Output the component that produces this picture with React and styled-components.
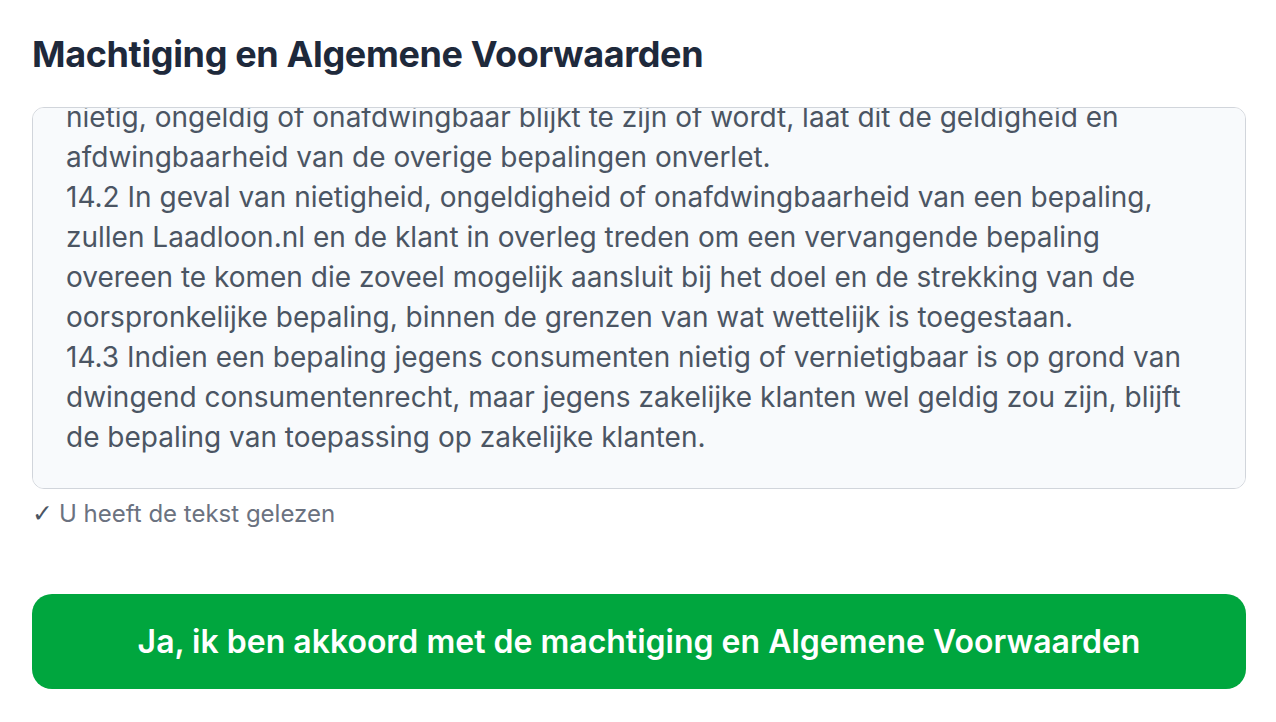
import React, { useEffect, useRef } from "react";
import styled, { createGlobalStyle } from "styled-components";

const GlobalStyle = createGlobalStyle`
  * { box-sizing: border-box; }
  body {
    margin: 0;
    background: #ffffff;
    font-family: Inter, "Noto Sans", sans-serif;
  }
`;

const Page = styled.main`
  display: flex;
  flex-direction: column;
  padding: 34px 30px 0 32px;
`;

const Title = styled.h1`
  margin: 0 0 33px;
  font-size: 36px;
  line-height: 40px;
  font-weight: 700;
  letter-spacing: -0.01em;
  color: #1e293b;
`;

const TermsBox = styled.div`
  height: 382px;
  overflow-y: auto;
  background: #f8fafc;
  border: 1px solid #d1d5db;
  border-radius: 12px;
  padding: 0 45px 31px 33px;
  scrollbar-width: none;

  &::-webkit-scrollbar {
    display: none;
  }
`;

const Paragraph = styled.p`
  margin: 0;
  font-size: 28px;
  line-height: 40px;
  color: #4b5563;
`;

const ReadNote = styled.div`
  display: flex;
  align-items: center;
  margin-top: 10px;
  font-size: 24px;
  line-height: 30px;
  color: #6b7280;
`;

const Check = styled.span`
  font-family: "DejaVu Sans", sans-serif;
  font-size: 25px;
  color: #4b5563;
  margin-right: 6px;
`;

const AgreeButton = styled.button`
  margin-top: 65px;
  width: 100%;
  border: none;
  border-radius: 20px;
  background: #00a63e;
  color: #ffffff;
  font-family: inherit;
  font-size: 32px;
  font-weight: 600;
  line-height: 33px;
  padding: 31px 24px;
  cursor: pointer;
`;

const paragraphs = [
  "13.1 Op deze algemene voorwaarden en alle overeenkomsten tussen Laadloon.nl en de klant is uitsluitend Nederlands recht van toepassing.",
  "13.2 Geschillen worden bij voorkeur in onderling overleg opgelost. Indien dit niet lukt, worden geschillen voorgelegd aan de bevoegde rechter in het arrondissement waar Laadloon.nl is gevestigd.",
  "14.1 Indien een of meer bepalingen van deze algemene voorwaarden op enig moment nietig, ongeldig of onafdwingbaar blijkt te zijn of wordt, laat dit de geldigheid en afdwingbaarheid van de overige bepalingen onverlet.",
  "14.2 In geval van nietigheid, ongeldigheid of onafdwingbaarheid van een bepaling, zullen Laadloon.nl en de klant in overleg treden om een vervangende bepaling overeen te komen die zoveel mogelijk aansluit bij het doel en de strekking van de oorspronkelijke bepaling, binnen de grenzen van wat wettelijk is toegestaan.",
  "14.3 Indien een bepaling jegens consumenten nietig of vernietigbaar is op grond van dwingend consumentenrecht, maar jegens zakelijke klanten wel geldig zou zijn, blijft de bepaling van toepassing op zakelijke klanten.",
];

export default function App() {
  const boxRef = useRef(null);

  useEffect(() => {
    const el = boxRef.current;
    if (el) el.scrollTop = el.scrollHeight;
  }, []);

  return (
    <>
      <GlobalStyle />
      <Page>
        <Title>Machtiging en Algemene Voorwaarden</Title>
        <TermsBox ref={boxRef}>
          {paragraphs.map((text) => (
            <Paragraph key={text.slice(0, 4)}>{text}</Paragraph>
          ))}
        </TermsBox>
        <ReadNote>
          <Check>✓</Check>U heeft de tekst gelezen
        </ReadNote>
        <AgreeButton>Ja, ik ben akkoord met de machtiging en Algemene Voorwaarden</AgreeButton>
      </Page>
    </>
  );
}
